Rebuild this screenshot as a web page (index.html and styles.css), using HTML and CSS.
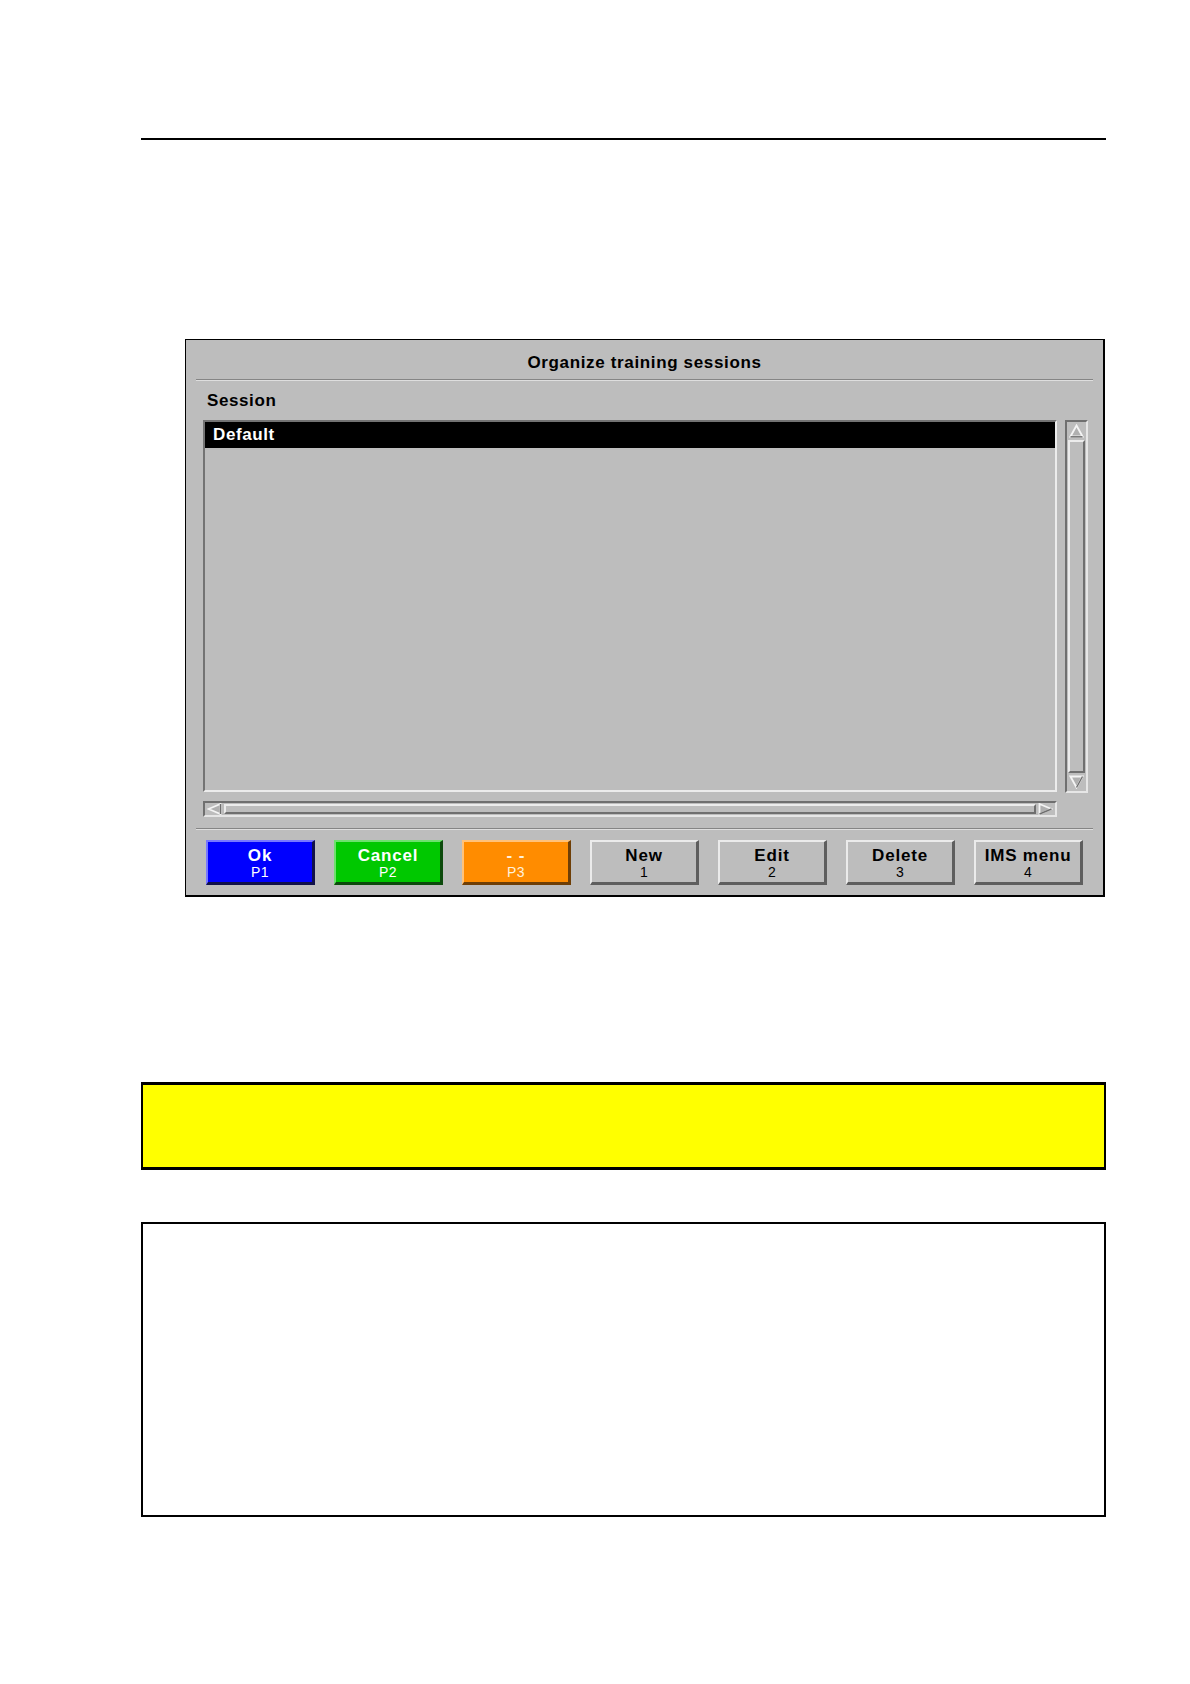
FILE: index.html
```html
<!DOCTYPE html>
<html lang="en">
<head>
<meta charset="utf-8">
<title>Organize training sessions</title>
<link rel="stylesheet" href="styles.css">
</head>
<body>
<div class="page">
  <div class="rule"></div>

  <div class="dialog">
    <div class="dlg-title">Organize training sessions</div>
    <div class="etch"></div>
    <div class="field-label">Session</div>
    <div class="list-row">
      <div class="listbox">
        <div class="item selected">Default</div>
      </div>
      <div class="vscroll">
        <div class="arrow">
          <svg width="15" height="14" viewBox="0 0 15 14"><polygon points="7.5,1.5 13.5,12.5 1.5,12.5" fill="#b0b0b0" stroke="#f4f4f4" stroke-width="1.8"/><line x1="1.5" y1="12.8" x2="13.5" y2="12.8" stroke="#6e6e6e" stroke-width="1.4"/></svg>
        </div>
        <div class="vthumb"></div>
        <div class="arrow">
          <svg width="15" height="14" viewBox="0 0 15 14"><polygon points="1.5,1.5 13.5,1.5 7.5,12.5" fill="#b0b0b0" stroke="#f4f4f4" stroke-width="1.8"/><line x1="13.5" y1="1.5" x2="7.5" y2="12.5" stroke="#6e6e6e" stroke-width="1.4"/></svg>
        </div>
      </div>
    </div>
    <div class="hscroll">
      <div class="harrow">
        <svg width="15" height="12" viewBox="0 0 15 12"><polygon points="1.5,6 13.5,1 13.5,11" fill="#b0b0b0" stroke="#f4f4f4" stroke-width="1.8"/><line x1="13.5" y1="1" x2="13.5" y2="11" stroke="#6e6e6e" stroke-width="1.4"/></svg>
      </div>
      <div class="hthumb"></div>
      <div class="harrow">
        <svg width="15" height="12" viewBox="0 0 15 12"><polygon points="1.5,1 13.5,6 1.5,11" fill="#b0b0b0" stroke="#f4f4f4" stroke-width="1.8"/><line x1="13.5" y1="6" x2="1.5" y2="11" stroke="#6e6e6e" stroke-width="1.4"/></svg>
      </div>
    </div>
    <div class="etch etch-low"></div>
    <div class="buttons">
      <div class="btn btn-blue"><span class="b-main">Ok</span><span class="b-sub">P1</span></div>
      <div class="btn btn-green"><span class="b-main">Cancel</span><span class="b-sub">P2</span></div>
      <div class="btn btn-orange"><span class="b-main b-dash">- -</span><span class="b-sub">P3</span></div>
      <div class="btn"><span class="b-main">New</span><span class="b-sub">1</span></div>
      <div class="btn"><span class="b-main">Edit</span><span class="b-sub">2</span></div>
      <div class="btn"><span class="b-main">Delete</span><span class="b-sub">3</span></div>
      <div class="btn"><span class="b-main">IMS menu</span><span class="b-sub">4</span></div>
    </div>
  </div>

  <div class="note-box"></div>
  <div class="text-box"></div>
</div>
</body>
</html>
```

FILE: styles.css
```css
* { box-sizing: border-box; }

body {
  margin: 0;
  background: #ffffff;
  font-family: "Liberation Sans", Arial, sans-serif;
  color: #000;
}

.page {
  width: 965px;
  margin-left: 141px;
  padding-top: 138px;
  padding-bottom: 100px;
}

.rule {
  height: 2px;
  background: #000;
}

/* ---------- dialog ---------- */
.dialog {
  margin-top: 199px;
  margin-left: 44px;
  width: 920px;
  height: 558px;
  background: #bdbdbd;
  border: 1px solid #000;
  border-right-width: 2px;
  border-bottom-width: 2px;
  padding: 0 10px;
}

.dlg-title {
  height: 39px;
  padding-top: 13px;
  line-height: 20px;
  text-align: center;
  font-weight: bold;
  font-size: 17px;
  letter-spacing: 0.65px;
}

.etch {
  height: 2px;
  border-top: 1px solid #858585;
  border-bottom: 1px solid #dedede;
}

.etch-low {
  margin-top: 11px;
}

.field-label {
  height: 39px;
  padding-top: 10px;
  padding-left: 11px;
  line-height: 20px;
  font-weight: bold;
  font-size: 17px;
  letter-spacing: 0.6px;
}

.list-row {
  display: flex;
  gap: 8px;
  margin-left: 7px;
  height: 373px;
}

.listbox {
  width: 854px;
  height: 372px;
  border: 2px solid;
  border-color: #737373 #ececec #ececec #737373;
  background: #bdbdbd;
}

.item {
  height: 26px;
  line-height: 26px;
  padding-left: 8px;
  font-weight: bold;
  font-size: 17px;
  letter-spacing: 0.6px;
}

.item.selected {
  background: #000;
  color: #fff;
}

.vscroll {
  width: 23px;
  height: 373px;
  display: flex;
  flex-direction: column;
  border: 2px solid;
  border-color: #6f6f6f #e6e6e6 #e6e6e6 #6f6f6f;
}

.arrow {
  height: 18px;
  flex: none;
  display: flex;
  align-items: center;
  justify-content: center;
}

.vthumb {
  flex: 1;
  margin: 0 1px;
  border: 2px solid;
  border-color: #ececec #6f6f6f #6f6f6f #ececec;
}

.hscroll {
  margin-top: 8px;
  margin-left: 7px;
  width: 854px;
  height: 16px;
  display: flex;
  border: 2px solid;
  border-color: #6f6f6f #e6e6e6 #e6e6e6 #6f6f6f;
}

.harrow {
  width: 19px;
  flex: none;
  display: flex;
  align-items: center;
  justify-content: center;
}

.hthumb {
  flex: 1;
  margin: 1px 0;
  border: 2px solid;
  border-color: #ececec #6f6f6f #6f6f6f #ececec;
}

/* ---------- buttons ---------- */
.buttons {
  margin-top: 10px;
  padding-left: 10px;
  display: flex;
  gap: 19px;
}

.btn {
  width: 109px;
  height: 45px;
  display: flex;
  flex-direction: column;
  align-items: center;
  padding-top: 6px;
  background: #bdbdbd;
  border: 2px solid;
  border-color: #ebebeb #5e5e5e #5e5e5e #ebebeb;
  border-right-width: 3px;
  border-bottom-width: 3px;
  color: #000;
}

.b-main {
  font-weight: bold;
  font-size: 17px;
  letter-spacing: 0.8px;
  line-height: 16px;
}

.b-sub {
  font-size: 14px;
  line-height: 15px;
  margin-top: 1px;
  letter-spacing: 0.4px;
}

.b-dash {
  letter-spacing: 1px;
}

.btn-blue {
  background: #0000ff;
  border-color: #7878ff #10104a #10104a #7878ff;
  color: #fff;
}

.btn-green {
  background: #00c800;
  border-color: #6ee06e #0c4a0c #0c4a0c #6ee06e;
  color: #fff;
}

.btn-orange {
  background: #ff8c00;
  border-color: #ffc27a #6e3e06 #6e3e06 #ffc27a;
  color: #fff0dc;
}

/* ---------- boxes ---------- */
.note-box {
  margin-top: 185px;
  height: 88px;
  background: #ffff00;
  border: 2px solid #000;
  border-top-width: 3px;
  border-bottom-width: 3px;
}

.text-box {
  margin-top: 52px;
  height: 295px;
  background: #ffffff;
  border: 2px solid #000;
}
```
